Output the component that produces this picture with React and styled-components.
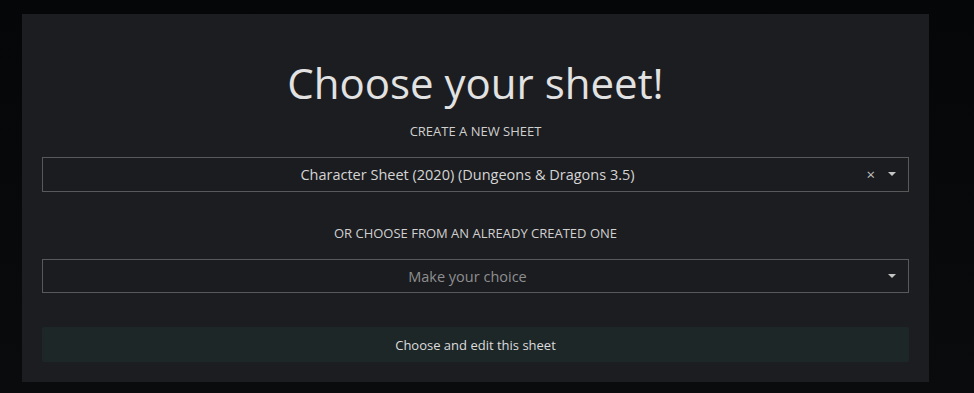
import React from 'react'
import styled, { createGlobalStyle } from 'styled-components';

const Global = createGlobalStyle`
  html, body {
    margin: 0;
    padding: 0;
    background: #070809;
    font-family: "Open Sans", "Noto Sans", sans-serif;
  }
`;

const Page = styled.div`
  width: 974px;
  height: 393px;
  padding: 14px 0 0 22px;
  box-sizing: border-box;
  background: linear-gradient(180deg, #050607 0%, #0a0b0d 100%);
  overflow: hidden;
`;

const Panel = styled.div`
  width: 907px;
  height: 368px;
  box-sizing: border-box;
  background: #1c1d20;
  padding: 41px 20px 20px;
  display: flex;
  flex-direction: column;
  color: #d6d6d6;
`;

const Title = styled.h1`
  margin: 0;
  font-size: 42px;
  font-weight: 400;
  line-height: 56px;
  text-align: center;
  color: #e2e2e2;
`;

const Label = styled.div`
  margin-top: ${p => p.$top}px;
  font-size: 13px;
  line-height: 18px;
  text-align: center;
  text-transform: uppercase;
  color: #d0d0d0;
`;

const Select = styled.div`
  margin-top: 17px;
  height: 35px;
  box-sizing: border-box;
  border: 1px solid #58595b;
  background: #1b1c1f;
  display: flex;
  align-items: center;
  padding: 0 12px 0 28px;
`;

const Value = styled.div`
  flex: 1;
  text-align: center;
  font-size: 14.5px;
  color: ${p => p.$placeholder ? '#8e8f91' : '#d4d4d4'};
`;

const Icons = styled.div`
  display: flex;
  align-items: center;
  gap: 13px;
  width: 32px;
  justify-content: flex-end;
`;

const Clear = styled.span`
  font-size: 15px;
  line-height: 1;
  color: #c0c0c0;
`;

const Caret = styled.span`
  width: 0;
  height: 0;
  border-left: 4px solid transparent;
  border-right: 4px solid transparent;
  border-top: 4px solid #c4c4c4;
`;

const Button = styled.button`
  margin-top: 34px;
  height: 35px;
  border: none;
  border-radius: 2px;
  background: #1d2728;
  color: #dcdcdc;
  font-family: inherit;
  font-size: 13px;
  cursor: pointer;
`;

export default function App() {
  return (
    <Page>
      <Global />
      <Panel>
        <Title>Choose your sheet!</Title>
        <Label $top={11}>Create a new sheet</Label>
        <Select>
          <Value>Character Sheet (2020) (Dungeons &amp; Dragons 3.5)</Value>
          <Icons>
            <Clear>×</Clear>
            <Caret />
          </Icons>
        </Select>
        <Label $top={32}>Or choose from an already created one</Label>
        <Select>
          <Value $placeholder>Make your choice</Value>
          <Icons>
            <Caret />
          </Icons>
        </Select>
        <Button>Choose and edit this sheet</Button>
      </Panel>
    </Page>
  )
}
